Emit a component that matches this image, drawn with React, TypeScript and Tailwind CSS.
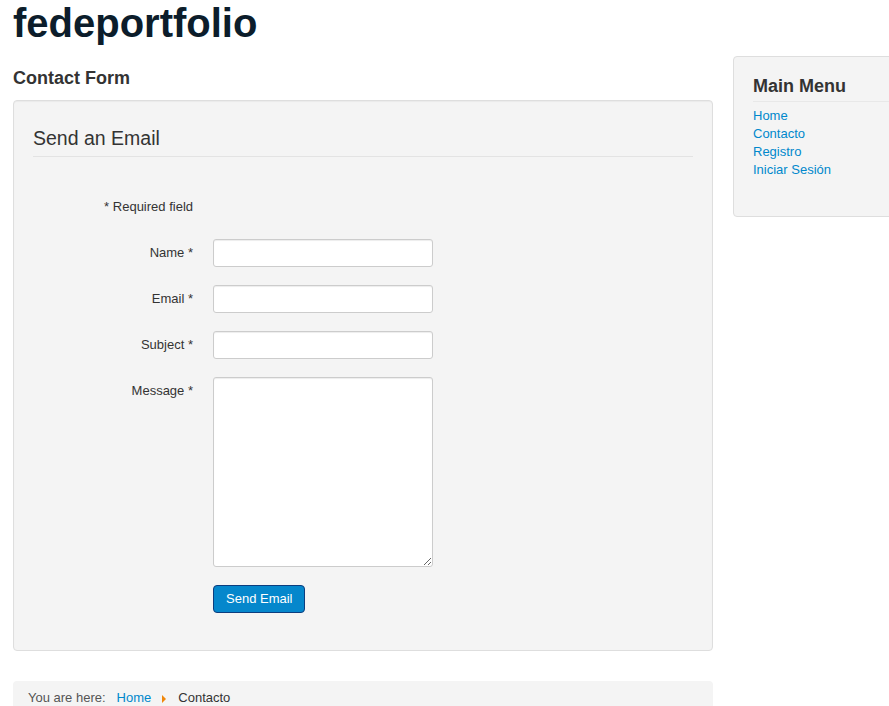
import React from 'react';

const fields = [
    { label: 'Name *', type: 'input' },
    { label: 'Email *', type: 'input' },
    { label: 'Subject *', type: 'input' },
    { label: 'Message *', type: 'textarea' },
];

const menuItems = ['Home', 'Contacto', 'Registro', 'Iniciar Sesión'];

const App: React.FC = () => {
  return (
    <div className="h-screen overflow-hidden bg-white font-['Liberation_Sans',Arial,sans-serif] text-[13px] leading-[18px] text-[#333]">
        <div className="w-[960px] pl-[13px]">
            <h1 className="pt-[3px] h-[56px] text-[40px] leading-[40px] font-bold text-[#0c1d2b]">
                fedeportfolio
            </h1>

            <div className="flex gap-[20px]">
                <main className="w-[700px] shrink-0">
                    <h2 className="mt-[12px] mb-[12px] text-[18px] leading-[20px] font-bold text-[#333]">
                        Contact Form
                    </h2>

                    <div className="bg-[#f4f4f4] border border-[#dedede] rounded-[4px] px-[19px] pt-[19px] pb-[37px] shadow-[inset_0_1px_1px_rgba(0,0,0,0.04)]">
                        <div className="text-[19.5px] leading-[36px] text-[#333] border-b border-[#e3e3e3]">
                            Send an Email
                        </div>

                        <div className="mt-[41px] flex">
                            <div className="w-[160px] text-right">* Required field</div>
                        </div>

                        <div className="mt-[23px] flex flex-col gap-[18px]">
                            {fields.map((field) => {
                                return (
                                    <div key={field.label} className="flex gap-[20px]">
                                        <label className="w-[160px] shrink-0 text-right pt-[5px]">
                                            {field.label}
                                        </label>
                                        {field.type === 'input' ? (
                                            <input
                                                type="text"
                                                className="w-[220px] h-[28px] bg-white border border-[#ccc] rounded-[3px] px-[6px] shadow-[inset_0_1px_1px_rgba(0,0,0,0.075)] focus:outline-none"
                                            />
                                        ) : (
                                            <textarea
                                                className="w-[220px] h-[190px] bg-white border border-[#ccc] rounded-[3px] px-[6px] shadow-[inset_0_1px_1px_rgba(0,0,0,0.075)] focus:outline-none"
                                            />
                                        )}
                                    </div>
                                )
                            })}

                            <div className="flex gap-[20px]">
                                <div className="w-[160px] shrink-0" />
                                <button className="h-[28px] px-[12px] bg-[#0587cc] border border-[#0c3d7e] rounded-[4px] text-white text-[13px] leading-[18px]">
                                    Send Email
                                </button>
                            </div>
                        </div>
                    </div>

                    <div className="mt-[30px] bg-[#f4f4f4] rounded-[4px] px-[15px] py-[8px] flex items-center">
                        <span className="text-[#555]">You are here:</span>
                        <a href="#" className="ml-[11px] text-[#0088cc]">Home</a>
                        <span className="ml-[11px] w-0 h-0 border-y-[4px] border-y-transparent border-l-[4px] border-l-[#f0870a] mt-[2px]" />
                        <span className="ml-[12px] text-[#333]">Contacto</span>
                    </div>
                </main>

                <aside className="w-[220px] shrink-0 self-start bg-[#f4f4f4] border border-[#dedede] rounded-[4px] px-[19px] pt-[19px] pb-[19px]">
                    <h3 className="text-[18px] leading-[20px] font-bold text-[#333] pb-[5px] border-b border-[#e8e8e8] mb-[5px]">
                        Main Menu
                    </h3>
                    <ul className="mb-[18px]">
                        {menuItems.map((item) => (
                            <li key={item}>
                                <a href="#" className="text-[#0088cc]">{item}</a>
                            </li>
                        ))}
                    </ul>
                </aside>
            </div>
        </div>
    </div>
  )
}

export default App
